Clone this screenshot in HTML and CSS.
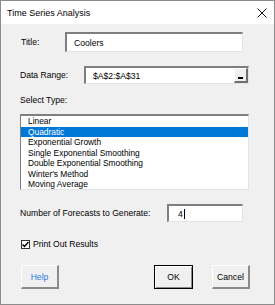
FILE: index.html
```html
<!DOCTYPE html>
<html lang="en">
<head>
    <meta charset="UTF-8">
    <meta name="viewport" content="width=device-width, initial-scale=1.0">
    <title>Time Series Analysis</title>
    <link rel="stylesheet" href="styles.css">
</head>
<body>
    <div class="dialog">
        <div class="titlebar">
            <span class="caption">Time Series Analysis</span>
            <svg class="close" width="10" height="10" viewBox="0 0 10 10">
                <path d="M0.5 0.5 L9.5 9.5 M9.5 0.5 L0.5 9.5" stroke="#111" stroke-width="1" fill="none"/>
            </svg>
        </div>
        <div class="content">
            <div class="row row-title">
                <label class="lbl lbl-title">Title:</label>
                <div class="field field-title">Coolers</div>
            </div>
            <div class="row row-range">
                <label class="lbl lbl-range">Data Range:</label>
                <div class="field field-range">
                    <span class="range-text">$A$2:$A$31</span>
                    <span class="refbtn"><i></i></span>
                </div>
            </div>
            <div class="lbl lbl-type">Select Type:</div>
            <ul class="listbox">
                <li>Linear</li>
                <li class="sel">Quadratic</li>
                <li>Exponential Growth</li>
                <li>Single Exponential Smoothing</li>
                <li>Double Exponential Smoothing</li>
                <li>Winter's Method</li>
                <li>Moving Average</li>
            </ul>
            <div class="row row-num">
                <label class="lbl lbl-num">Number of Forecasts to Generate:</label>
                <div class="field field-num">4<span class="caret"></span></div>
            </div>
            <div class="check-row">
                <span class="checkbox">
                    <svg width="7" height="7" viewBox="0 0 7 7">
                        <path d="M0.5 3.5 L2.5 5.5 L6.5 1" stroke="#000" stroke-width="1.5" fill="none"/>
                    </svg>
                </span>
                <span>Print Out Results</span>
            </div>
            <div class="buttons">
                <button class="btn btn-help">Help</button>
                <button class="btn btn-ok">OK</button>
                <button class="btn btn-cancel">Cancel</button>
            </div>
        </div>
    </div>
</body>
</html>
```

FILE: styles.css
```css
body{
    margin: 0;
    font-family: "Liberation Sans", Arial, sans-serif;
    font-size: 8.6px;
    color: #000;
}
.dialog{
    width: 275px;
    height: 305px;
    box-sizing: border-box;
    border: 1px solid #8c8c8c;
    background: #f0f0f0;
}
.titlebar{
    height: 23px;
    background: #fff;
    display: flex;
    align-items: center;
    padding-left: 6px;
}
.caption{
    font-size: 9px;
    flex: 1;
}
.close{
    margin-right: 7px;
}
.content{
    padding-left: 19px;
}
.row{
    display: flex;
    align-items: center;
}
.lbl{
    display: block;
}
.field{
    box-sizing: border-box;
    background: #fff;
    border-style: solid;
    border-width: 2px 1px 1px 2px;
    border-color: #7f7f7f #e3e3e3 #e3e3e3 #7f7f7f;
    padding-left: 7px;
    display: flex;
    align-items: center;
}
.row-title{
    margin-top: 8px;
    height: 20px;
}
.lbl-title{
    width: 44px;
    padding-left: 1px;
}
.field-title{
    width: 178px;
    height: 20px;
}
.row-range{
    margin-top: 14px;
    height: 18px;
}
.lbl-range{
    width: 64px;
}
.field-range{
    width: 165px;
    height: 18px;
}
.range-text{
    flex: 1;
}
.refbtn{
    box-sizing: border-box;
    width: 14px;
    height: 15px;
    background: #f0f0f0;
    border-style: solid;
    border-width: 1px 2px 2px 1px;
    border-color: #fff #6f6f6f #6f6f6f #fff;
    display: flex;
    justify-content: center;
    align-items: flex-end;
    padding-bottom: 2px;
}
.refbtn i{
    display: block;
    width: 5px;
    height: 2px;
    background: #000;
}
.lbl-type{
    margin-top: 10px;
    line-height: 12px;
}
.listbox{
    list-style: none;
    margin: 8px 0 0 0;
    padding: 0;
    box-sizing: border-box;
    width: 229px;
    height: 76px;
    background: #fff;
    border-style: solid;
    border-width: 2px 1px 1px 1px;
    border-color: #7f7f7f #e3e3e3 #e3e3e3 #7f7f7f;
    font-size: 8.4px;
}
.listbox li{
    height: 10.5px;
    line-height: 10.5px;
    padding-left: 7px;
}
.listbox li.sel{
    background: #0078d7;
    color: #fff;
}
.row-num{
    margin-top: 14px;
    height: 18px;
}
.lbl-num{
    width: 147px;
}
.field-num{
    width: 76px;
    height: 18px;
    padding-left: 9px;
}
.caret{
    display: inline-block;
    width: 1px;
    height: 10px;
    background: #000;
    margin-left: 1px;
}
.check-row{
    margin-top: 17px;
    height: 10px;
    display: flex;
    align-items: center;
}
.checkbox{
    box-sizing: border-box;
    width: 9px;
    height: 9px;
    margin-left: 1px;
    margin-right: 3px;
    background: #fff;
    border: 1px solid #333;
    display: flex;
    align-items: center;
    justify-content: center;
}
.buttons{
    margin-top: 16px;
    width: 230px;
    display: flex;
}
.btn{
    box-sizing: border-box;
    height: 24px;
    background: #f0f0f0;
    font-family: inherit;
    font-size: 8.6px;
    padding: 0;
    border-style: solid;
    border-width: 1px 2px 2px 1px;
    border-color: #fff #8a8a8a #8a8a8a #fff;
}
.btn-help{
    width: 38px;
    margin-left: 1px;
    color: #2b7de0;
}
.btn-ok{
    width: 39px;
    margin-left: auto;
    border: 1px solid #000;
    box-shadow: inset 1px 1px 0 #fff, inset -1px -1px 0 #8a8a8a;
}
.btn-cancel{
    width: 38px;
    margin-left: 19px;
}
```
